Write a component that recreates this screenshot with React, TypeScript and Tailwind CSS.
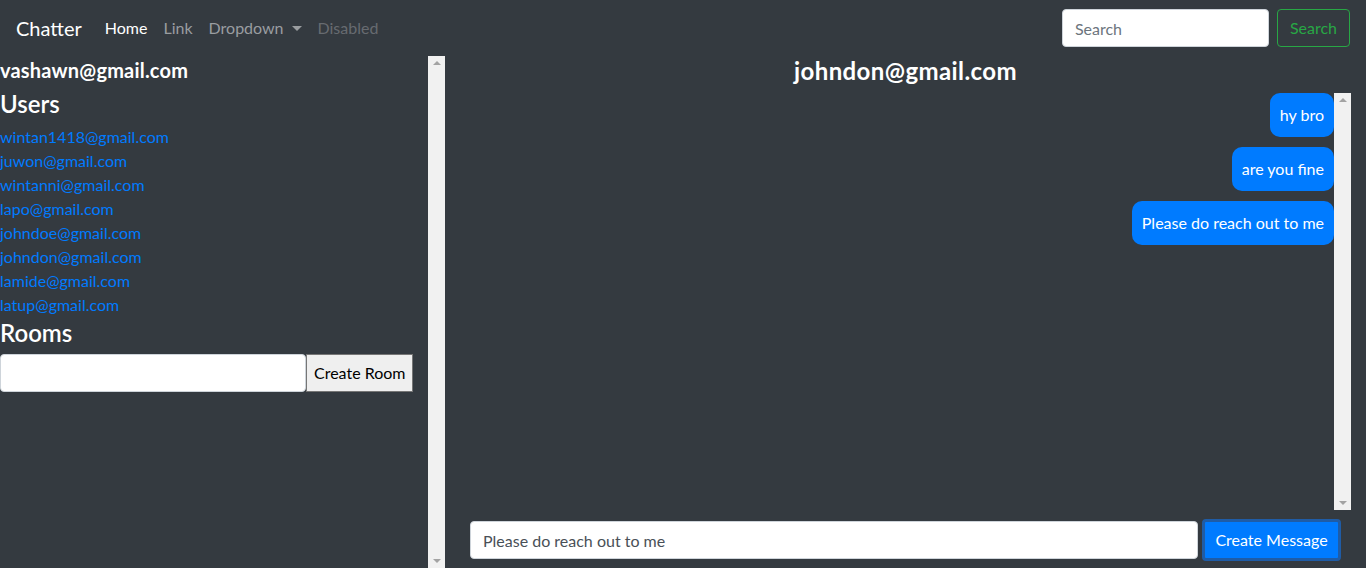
const users = [
  "wintan1418@gmail.com",
  "juwon@gmail.com",
  "wintanni@gmail.com",
  "lapo@gmail.com",
  "johndoe@gmail.com",
  "johndon@gmail.com",
  "lamide@gmail.com",
  "latup@gmail.com",
];

const messages = ["hy bro", "are you fine", "Please do reach out to me"];

function Scrollbar({ className }: { className: string }) {
  return (
    <div className={"flex flex-col justify-between items-center bg-[#f1f1f1] w-[17px] py-[5px] " + className}>
      <span className="w-0 h-0 border-x-[4px] border-x-transparent border-b-[4px] border-b-[#a3a3a3]" />
      <span className="w-0 h-0 border-x-[4px] border-x-transparent border-t-[4px] border-t-[#a3a3a3]" />
    </div>
  );
}

function Navbar() {
  return (
    <nav className="h-[56px] flex items-center justify-between px-4">
      <div className="flex items-center">
        <a href="#" className="text-[20px] text-white mr-[23px]">Chatter</a>
        <div className="flex items-center gap-4 text-[16px]">
          <a href="#" className="text-white">Home</a>
          <a href="#" className="text-[#9a9da0]">Link</a>
          <a href="#" className="text-[#9a9da0] flex items-center gap-2">
            Dropdown
            <span className="w-0 h-0 border-x-[5px] border-x-transparent border-t-[5px] border-t-[#9a9da0]" />
          </a>
          <span className="text-[#676b70]">Disabled</span>
        </div>
      </div>
      <div className="flex items-center gap-2">
        <input
          className="w-[207px] h-[38px] bg-white rounded border border-[#ced4da] px-3 text-[16px] text-[#495057] placeholder:text-[#6c757d]"
          placeholder="Search"
        />
        <button className="h-[38px] px-3 rounded border border-[#28a745] text-[#28a745] text-[16px]">Search</button>
      </div>
    </nav>
  );
}

function Sidebar() {
  return (
    <div className="flex w-[445px] h-[512px]">
      <div className="flex-1 flex flex-col">
        <h4 className="text-[20px] font-bold text-white leading-[24px] mt-[2px] tracking-[0.2px]">vashawn@gmail.com</h4>
        <h3 className="text-[24px] font-semibold text-white leading-[28px] mt-[8px]">Users</h3>
        <ul className="mt-[7px]">
          {users.map((u) => (
            <li key={u}>
              <a href="#" className="text-[#007bff] text-[16px] leading-[24px]">{u}</a>
            </li>
          ))}
        </ul>
        <h3 className="text-[24px] font-semibold text-white leading-[28px] mt-[2px]">Rooms</h3>
        <div className="flex mt-[7px]">
          <input className="w-[306px] h-[38px] bg-white rounded border border-[#ced4da]" />
          <button className="h-[38px] px-[7px] bg-[#efefef] border border-[#767676] text-black text-[16px]">Create Room</button>
        </div>
      </div>
      <Scrollbar className="h-full" />
    </div>
  );
}

function ChatPanel() {
  return (
    <div className="flex-1 flex flex-col">
      <h3 className="text-center text-[24px] font-bold text-white leading-[28px] mt-[1px] mb-[8px] tracking-[0.4px]">
        johndon@gmail.com
      </h3>
      <div className="flex pr-[15px]">
        <div className="flex-1 flex flex-col items-end gap-[10px] h-[417px]">
          {messages.map((m) => (
            <div key={m} className="bg-[#007bff] text-white text-[16px] rounded-[10px] px-[10px] h-[44px] flex items-center">
              {m}
            </div>
          ))}
        </div>
        <Scrollbar className="h-[417px]" />
      </div>
      <div className="flex items-center px-[25px] mt-[9px]">
        <input
          className="flex-1 h-[38px] bg-white rounded border border-[#ced4da] px-3 text-[16px] text-[#495057]"
          defaultValue="Please do reach out to me"
        />
        <button className="ml-[4px] w-[139px] h-[42px] bg-[#007bff] text-white text-[16px] rounded border-[3px] border-[#1f5ca6]">
          Create Message
        </button>
      </div>
    </div>
  );
}

export default function App() {
  return (
    <div className="bg-[#343a40] min-h-[568px] h-[568px] overflow-hidden font-['Lato',sans-serif]">
      <Navbar />
      <div className="flex">
        <Sidebar />
        <ChatPanel />
      </div>
    </div>
  );
}
